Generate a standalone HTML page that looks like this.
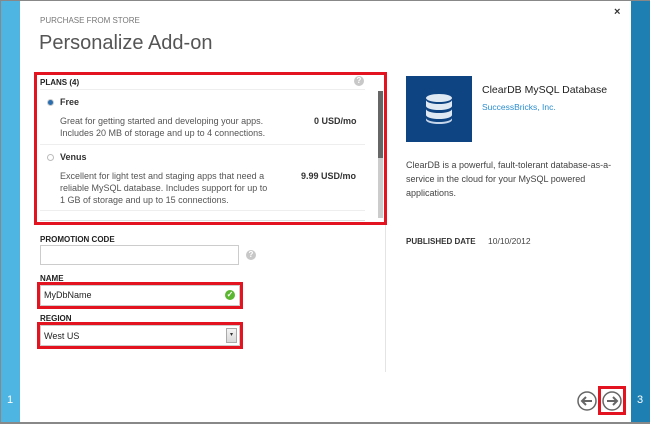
<!DOCTYPE html>
<html><head><meta charset="utf-8"><style>
*{margin:0;padding:0;box-sizing:border-box}
body{width:650px;height:424px;overflow:hidden;background:#fff;font-family:"Liberation Sans",sans-serif;color:#333;position:relative}
.a{position:absolute}
.lbl{font-size:8px;font-weight:600;color:#222;letter-spacing:0}
.t{font-size:9px;color:#555}
.red{border:3px solid #e3141f}
</style></head><body>
<div class="a" style="left:0;top:0;width:650px;height:1px;background:#888"></div>
<div class="a" style="left:0;top:422px;width:650px;height:2px;background:#888"></div>
<div class="a" style="left:0;top:0;width:1px;height:424px;background:#888"></div>
<div class="a" style="left:1px;top:1px;width:19px;height:421px;background:#4eb4e2"></div>
<div class="a" style="left:631px;top:1px;width:19px;height:421px;background:#1e80b2"></div>
<div class="a" style="left:7px;top:394px;color:#fff;font-size:11px">1</div>
<div class="a" style="left:637px;top:394px;color:#fff;font-size:11px">3</div>

<div class="a" style="left:40px;top:16px;font-size:8px;color:#777">PURCHASE FROM STORE</div>
<div class="a" style="left:39px;top:32px;font-size:20px;color:#555">Personalize Add-on</div>
<div class="a" style="left:614px;top:6px;font-size:11px;color:#333;font-weight:bold">×</div>

<div class="a" style="left:385px;top:72px;width:1px;height:300px;background:#e4e4e4"></div>
<div class="a red" style="left:34px;top:72px;width:353px;height:153px"></div>
<div class="a lbl" style="left:40px;top:78px">PLANS (4)</div>
<div class="a" style="left:354px;top:76px;width:10px;height:10px;border-radius:50%;background:#c8c8c8;color:#fff;font-size:8px;text-align:center;line-height:10px;font-weight:bold">?</div>
<div class="a" style="left:40px;top:89px;width:325px;height:1px;background:#eee"></div>
<div class="a" style="left:48px;top:100px;width:5px;height:5px;border-radius:50%;background:#2a6eb0;box-shadow:0 0 0 1px #ccc"></div>
<div class="a" style="left:60px;top:97px;font-size:9px;font-weight:bold;color:#333">Free</div>
<div class="a t" style="left:60px;top:115px;line-height:12px">Great for getting started and developing your apps.<br>Includes 20 MB of storage and up to 4 connections.</div>
<div class="a" style="left:314px;top:116px;font-size:9px;font-weight:bold;color:#333">0 USD/mo</div>
<div class="a" style="left:40px;top:144px;width:325px;height:1px;background:#eee"></div>
<div class="a" style="left:48px;top:155px;width:5px;height:5px;border-radius:50%;background:#fff;box-shadow:0 0 0 1px #bbb"></div>
<div class="a" style="left:60px;top:152px;font-size:9px;font-weight:bold;color:#333">Venus</div>
<div class="a t" style="left:60px;top:170px;line-height:12px">Excellent for light test and staging apps that need a<br>reliable MySQL database. Includes support for up to<br>1 GB of storage and up to 15 connections.</div>
<div class="a" style="left:301px;top:171px;font-size:9px;font-weight:bold;color:#333">9.99 USD/mo</div>
<div class="a" style="left:40px;top:210px;width:325px;height:1px;background:#eee"></div>
<div class="a" style="left:40px;top:220px;width:325px;height:1px;background:#ddd"></div>
<div class="a" style="left:378px;top:91px;width:5px;height:127px;background:#ccc"></div>
<div class="a" style="left:378px;top:91px;width:5px;height:67px;background:#666"></div>

<div class="a lbl" style="left:40px;top:235px">PROMOTION CODE</div>
<div class="a" style="left:40px;top:245px;width:199px;height:20px;border:1px solid #ccc"></div>
<div class="a" style="left:246px;top:250px;width:10px;height:10px;border-radius:50%;background:#c8c8c8;color:#fff;font-size:8px;text-align:center;line-height:10px;font-weight:bold">?</div>

<div class="a lbl" style="left:40px;top:274px">NAME</div>
<div class="a red" style="left:37px;top:282px;width:206px;height:27px"></div>
<div class="a" style="left:40px;top:285px;width:200px;height:21px;border:1px solid #ccc"></div>
<div class="a" style="left:44px;top:290px;font-size:9px;color:#222">MyDbName</div>
<div class="a" style="left:225px;top:290px;width:10px;height:10px;border-radius:50%;background:#5bb630;color:#fff;font-size:8px;text-align:center;line-height:10px;font-weight:bold">✓</div>

<div class="a lbl" style="left:40px;top:314px">REGION</div>
<div class="a red" style="left:37px;top:322px;width:206px;height:27px"></div>
<div class="a" style="left:40px;top:325px;width:200px;height:21px;border:1px solid #ccc"></div>
<div class="a" style="left:44px;top:331px;font-size:9px;color:#222">West US</div>
<div class="a" style="left:226px;top:328px;width:11px;height:15px;border:1px solid #aaa;background:linear-gradient(#f4f4f4,#d8d8d8);font-size:6px;text-align:center;line-height:13px;color:#333">▾</div>

<div class="a" style="left:406px;top:76px;width:66px;height:66px;background:#0f4482">
<svg width="66" height="66" viewBox="0 0 66 66">
<g fill="#dfe9f4">
<ellipse cx="33" cy="22" rx="13" ry="4"/>
<path d="M20 24 a13 4 0 0 0 26 0 v6 a13 4 0 0 1 -26 0z"/>
<path d="M20 33 a13 4 0 0 0 26 0 v6 a13 4 0 0 1 -26 0z"/>
<path d="M20 42 a13 4 0 0 0 26 0 v2 a13 4 0 0 1 -26 0z" fill="#c5d6ea"/>
</g></svg></div>
<div class="a" style="left:482px;top:84px;font-size:10.5px;color:#222">ClearDB MySQL Database</div>
<div class="a" style="left:482px;top:102px;font-size:8.5px;color:#2a8ed0">SuccessBricks, Inc.</div>
<div class="a" style="left:406px;top:158px;font-size:9px;color:#444;line-height:14px">ClearDB is a powerful, fault-tolerant database-as-a-<br>service in the cloud for your MySQL powered<br>applications.</div>
<div class="a lbl" style="left:406px;top:237px;color:#333">PUBLISHED DATE</div>
<div class="a" style="left:488px;top:236px;font-size:8.5px;color:#444">10/10/2012</div>

<svg class="a" style="left:576px;top:390px" width="22" height="22" viewBox="0 0 22 22"><circle cx="11" cy="11" r="9" fill="none" stroke="#666" stroke-width="1.5"/><path d="M16 11H6M10 7l-4 4 4 4" fill="none" stroke="#666" stroke-width="2"/></svg>
<div class="a red" style="left:598px;top:386px;width:28px;height:29px"></div>
<svg class="a" style="left:601px;top:390px" width="22" height="22" viewBox="0 0 22 22"><circle cx="11" cy="11" r="9" fill="none" stroke="#666" stroke-width="1.5"/><path d="M6 11H16M12 7l4 4-4 4" fill="none" stroke="#666" stroke-width="2"/></svg>
</body></html>
